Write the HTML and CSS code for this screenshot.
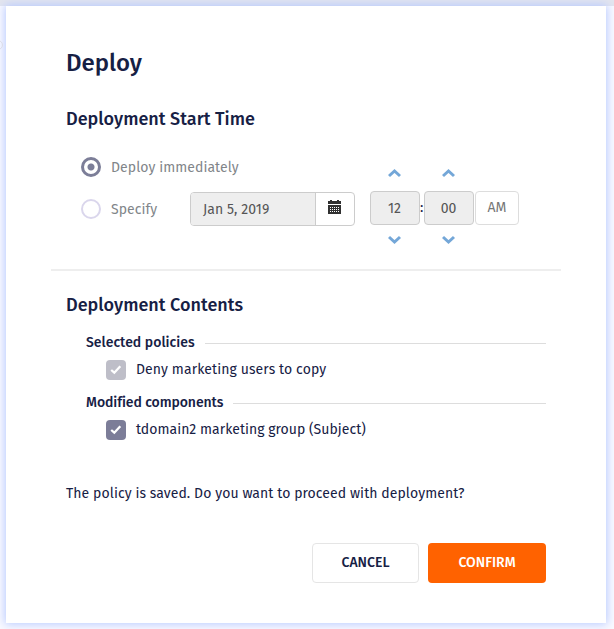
FILE: index.html
```html
<!DOCTYPE html>
<html lang="en">
<head>
<meta charset="utf-8">
<title>Deploy</title>
<link rel="stylesheet" href="styles.css">
</head>
<body>
<div class="edge-mark"></div>
<main class="dialog">
  <h1 class="title">Deploy</h1>
  <h2 class="heading start-heading">Deployment Start Time</h2>
  <section class="schedule">
    <div class="options">
      <label class="option now"><i class="radio checked"></i><span class="option-text">Deploy immediately</span></label>
      <div class="option">
        <i class="radio"></i><span class="option-text">Specify</span>
      </div>
    </div>
    <div class="date">
      <span class="date-value">Jan 5, 2019</span>
      <span class="date-button">
        <svg width="13" height="14" viewBox="0 0 13 14" shape-rendering="crispEdges"><path fill="#303030" d="M0 1h2V0h2v1h5V0h2v1h2v3H0zM0 5h13v9H0z"/><path stroke="#fff" stroke-width="1" stroke-dasharray="1 1" d="M2 7.500h9M2 9.500h9M2 11.500h9"/></svg>
      </span>
    </div>
    <div class="time">
      <div class="spinner">
        <svg width="14" height="10" viewBox="0 0 14 10"><path d="M1 8 6.500 3l5.500 5"/></svg>
        <span class="number">12</span>
        <svg width="14" height="10" viewBox="0 0 14 10"><path d="M1 2 6.500 7 12 2"/></svg>
      </div>
      <span class="colon">:</span>
      <div class="spinner">
        <svg width="14" height="10" viewBox="0 0 14 10"><path d="M1 8 6.500 3l5.500 5"/></svg>
        <span class="number">00</span>
        <svg width="14" height="10" viewBox="0 0 14 10"><path d="M1 2 6.500 7 12 2"/></svg>
      </div>
      <span class="meridian">AM</span>
    </div>
  </section>
  <hr class="divider">
  <h2 class="heading contents-heading">Deployment Contents</h2>
  <section class="contents">
    <h3 class="group"><span>Selected policies</span></h3>
    <div class="item"><i class="check muted"><svg width="20" height="20" viewBox="0 0 20 20"><path d="m5.200 10 3.100 2.700 6-6.400"/></svg></i><span class="policy">Deny marketing users to copy</span></div>
    <h3 class="group components"><span>Modified components</span></h3>
    <div class="item"><i class="check"><svg width="20" height="20" viewBox="0 0 20 20"><path d="m5.200 10 3.100 2.700 6-6.400"/></svg></i><span class="component">tdomain2 marketing group (Subject)</span></div>
  </section>
  <p class="message">The policy is saved. Do you want to proceed with deployment?</p>
  <footer class="actions">
    <button class="button cancel">CANCEL</button>
    <button class="button confirm">CONFIRM</button>
  </footer>
</main>
</body>
</html>
```

FILE: styles.css
```css
* { box-sizing: border-box; }
body {
  margin: 0;
  padding: 6px 8px 6px 6px;
  height: 629px;
  overflow: hidden;
  background: linear-gradient(#e3e5ee 6px, #fafaff 6px);
  font: 14px/20px "Fira Sans", "Noto Sans", sans-serif;
  color: #162044;
}
.edge-mark {
  position: absolute;
  left: -7px;
  top: 40px;
  width: 10px;
  height: 10px;
  border: 1px solid #dcdde8;
  border-radius: 50%;
}
.dialog {
  height: 617px;
  padding: 42px 60px 0;
  background: #fff;
  box-shadow: 0 0 9px 1px #b5c8ff;
}
h1, h2, h3, p { margin: 0; white-space: nowrap; }
.title { height: 30px; line-height: 30px; font-size: 24px; font-weight: 500; }
.heading { height: 24px; line-height: 26px; font-size: 18px; font-weight: 500; letter-spacing: .02px; }
.start-heading { margin-top: 28px; }
.schedule { display: flex; height: 90px; margin-top: 28px; padding-left: 15px; }
.options { width: 109px; flex: none; color: #818589; }
.option { display: flex; align-items: center; height: 20px; gap: 10px; white-space: nowrap; }
.option + .option { margin-top: 22px; }
.option-text { padding-top: 2px; letter-spacing: .06px; }
.now { margin-top: -1px; }
.radio { flex: none; width: 20px; height: 20px; border: 2px solid #dad6ec; border-radius: 50%; }
.radio.checked { border: 3px solid #7c7e98; background: radial-gradient(circle, #7c7e98 3px, transparent 4px); }
.date {
  display: flex;
  flex: none;
  width: 165px;
  height: 34px;
  margin-top: 34px;
  border: 1px solid #ccc;
  border-radius: 4px;
  overflow: hidden;
}
.date-value { width: 124px; padding-left: 12px; line-height: 34px; background: #eee; color: #555; letter-spacing: .06px; }
.date-button { display: flex; flex: 1; padding: 7px 0 0 12px; border-left: 1px solid #ccc; }
.time { display: flex; height: 82px; margin: 9px 0 0 15px; align-items: center; }
.spinner { display: flex; flex-direction: column; width: 50px; align-items: center; gap: 12px; }
.spinner svg { fill: none; stroke: #74a7d8; stroke-width: 3; }
.spinner svg:first-child { margin-bottom: 1px; }
.number {
  width: 50px;
  height: 34px;
  padding-right: 1px;
  border: 1px solid #ccc;
  border-radius: 4px;
  background: #eee;
  color: #555;
  line-height: 33px;
  text-align: center;
}
.spinner svg:last-child { margin-top: -2px; margin-bottom: 3px; }
.colon { width: 4px; }
.meridian {
  width: 44px;
  height: 34px;
  margin-left: 1px;
  border: 1px solid #ddd;
  border-radius: 4px;
  color: #777;
  line-height: 32px;
  text-align: center;
}
.divider { height: 2px; margin: 21px -15px 0; border: 0; background: #eee; }
.contents-heading { margin-top: 21px; }
.contents { padding: 16px 0 0 20px; }
.group { display: flex; align-items: center; height: 20px; font-size: 14px; font-weight: 500; letter-spacing: .03px; }
.components { letter-spacing: -.07px; }
.group span { padding-top: 2px; }
.group::after { content: ""; flex: 1; height: 1px; margin: 3px 0 0 10px; background: #ddd; }
.item { display: flex; align-items: center; height: 20px; margin: 8px 0 12px 20px; gap: 10px; white-space: nowrap; }
.policy { letter-spacing: .1px; }
.component { letter-spacing: .03px; }
.check { width: 20px; height: 20px; border-radius: 4px; background: #7c7d98; }
.check.muted { background: #bebec8; }
.check svg { display: block; fill: none; stroke: #fff; stroke-width: 2.3; }
.message { margin-top: 44px; letter-spacing: .075px; }
.actions { display: flex; justify-content: flex-end; gap: 9px; margin-top: 39px; }
.button { height: 40px; padding: 0 0 1px; border-radius: 4px; font: 500 14px/20px "Fira Sans", "Noto Sans", sans-serif; }
.cancel { width: 107px; border: 1px solid #e5e5e5; background: #fff; color: #162044; }
.confirm { width: 118px; border: 0; background: #ff6200; color: #fff; }
```
